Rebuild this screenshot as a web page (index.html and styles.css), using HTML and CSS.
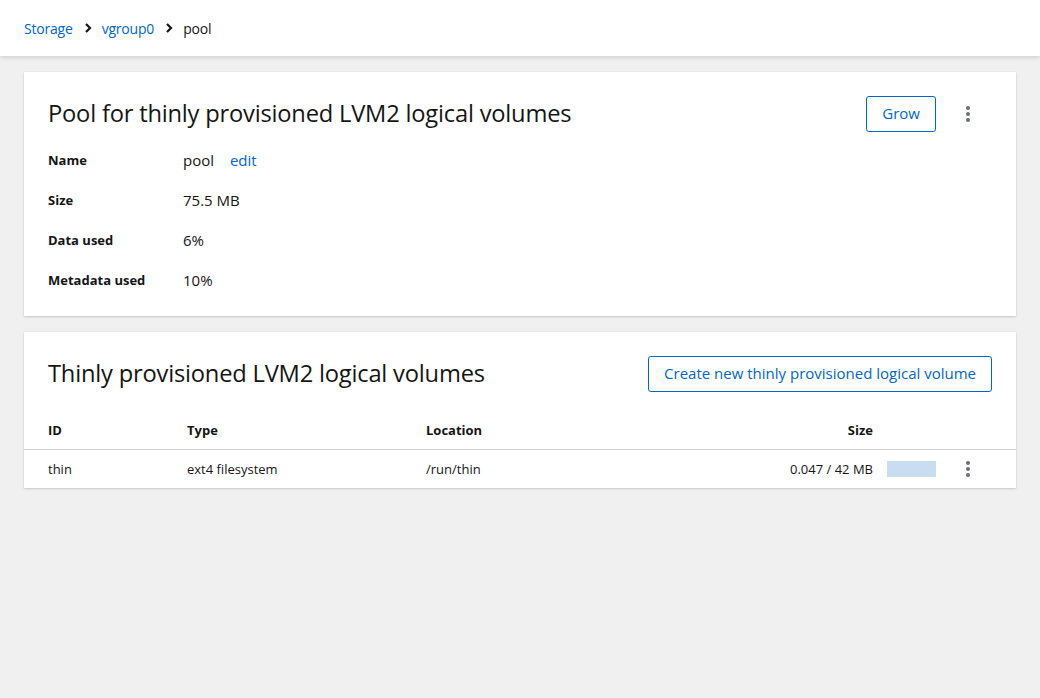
FILE: index.html
```html
<!DOCTYPE html>
<html>
<head>
<meta charset="utf-8">
<link rel="stylesheet" href="styles.css">
</head>
<body>
<header class="topbar">
  <nav class="crumbs">
    <a class="crumb-link">Storage</a>
    <svg class="chev" viewBox="0 0 8 10" width="8" height="10"><path d="M2 1 L6 5 L2 9" fill="none" stroke="#151515" stroke-width="2.2"/></svg>
    <a class="crumb-link">vgroup0</a>
    <svg class="chev" viewBox="0 0 8 10" width="8" height="10"><path d="M2 1 L6 5 L2 9" fill="none" stroke="#151515" stroke-width="2.2"/></svg>
    <span class="crumb-current">pool</span>
  </nav>
</header>
<main class="content">
  <section class="card">
    <div class="card-head">
      <h1 class="card-title">Pool for thinly provisioned LVM2 logical volumes</h1>
      <div class="actions">
        <button class="btn">Grow</button>
        <span class="kebab"><i></i><i></i><i></i></span>
      </div>
    </div>
    <dl class="desc">
      <dt>Name</dt><dd>pool <a class="link edit">edit</a></dd>
      <dt>Size</dt><dd>75.5 MB</dd>
      <dt>Data used</dt><dd>6%</dd>
      <dt>Metadata used</dt><dd>10%</dd>
    </dl>
  </section>
  <section class="card card2">
    <div class="card-head head2">
      <h2 class="card-title">Thinly provisioned LVM2 logical volumes</h2>
      <button class="btn">Create new thinly provisioned logical volume</button>
    </div>
    <div class="table">
      <div class="row thead">
        <span class="c-id">ID</span>
        <span class="c-type">Type</span>
        <span class="c-loc">Location</span>
        <span class="c-size">Size</span>
        <span class="c-bar"></span>
        <span class="c-act"></span>
      </div>
      <div class="row tbody">
        <span class="c-id">thin</span>
        <span class="c-type">ext4 filesystem</span>
        <span class="c-loc">/run/thin</span>
        <span class="c-size">0.047 / 42 MB</span>
        <span class="c-bar"><span class="bar"></span></span>
        <span class="c-act"><span class="kebab"><i></i><i></i><i></i></span></span>
      </div>
    </div>
  </section>
</main>
</body>
</html>
```
FILE: styles.css
```css
* { box-sizing: border-box; }
html, body { margin: 0; padding: 0; }
body {
  background: #f0f0f0;
  font-family: "Open Sans", "Liberation Sans", sans-serif;
  color: #151515;
  width: 1040px;
  height: 698px;
  overflow: hidden;
}
.topbar {
  background: #fff;
  height: 56px;
  box-shadow: 0 2px 4px rgba(0,0,0,0.12);
  display: flex;
  align-items: center;
  padding: 0 24px;
  position: relative;
  z-index: 1;
}
.crumbs { display: flex; align-items: center; font-size: 14px; letter-spacing: -0.2px; }
.crumb-link { color: #0066cc; }
.chev { margin: 0 10px 0 11px; }
.crumb-current { color: #151515; }
.content {
  padding: 16px 24px;
  display: flex;
  flex-direction: column;
  gap: 16px;
}
.card {
  background: #fff;
  box-shadow: 0 1px 2px rgba(0,0,0,0.16), 0 0 1px rgba(0,0,0,0.08);
  padding: 24px 24px 25px;
}
.card-head {
  display: flex;
  align-items: center;
  justify-content: space-between;
  height: 36px;
}
.card-title {
  margin: 0;
  font-size: 23.7px;
  font-weight: 400;
  letter-spacing: -0.2px;
  position: relative;
  top: -1px;
}
.actions { display: flex; align-items: center; gap: 20px; margin-right: 12px; }
.btn {
  font-family: inherit;
  font-size: 15px;
  line-height: 20px;
  color: #0066cc;
  background: #fff;
  border: 1px solid #0066cc;
  border-radius: 3px;
  height: 36px;
  padding: 0 15px 2px;
}
.kebab { display: inline-flex; flex-direction: column; gap: 2px; width: 24px; align-items: center; }
.kebab i { display: block; width: 4px; height: 4px; border-radius: 50%; background: #6a6e73; }
.desc {
  display: grid;
  grid-template-columns: 135px 1fr;
  row-gap: 18px;
  margin: 17px 0 0;
  align-items: center;
}
.desc dt { font-size: 13px; font-weight: 700; height: 22px; line-height: 22px; }
.desc dd { margin: 0; font-size: 15px; height: 22px; line-height: 22px; }
.edit { color: #0066cc; margin-left: 12px; }
.card2 { padding: 24px 0 0; }
.head2 { padding: 0 24px; }
.table { margin-top: 20px; }
.row { display: flex; align-items: center; padding: 0 24px; font-size: 13px; }
.thead { height: 38px; font-weight: 700; border-bottom: 1px solid #d2d2d2; }
.thead span { position: relative; top: -1px; }
.tbody { height: 38px; }
.c-id { width: 139px; }
.c-type { width: 239px; }
.c-loc { width: 200px; }
.c-size { flex: 1; text-align: right; }
.c-bar { width: 63px; padding-left: 14px; display: flex; }
.bar { display: block; width: 49px; height: 16px; background: #c8ddf2; }
.c-act { width: 56px; display: flex; justify-content: flex-end; padding-right: 12px; }
```
